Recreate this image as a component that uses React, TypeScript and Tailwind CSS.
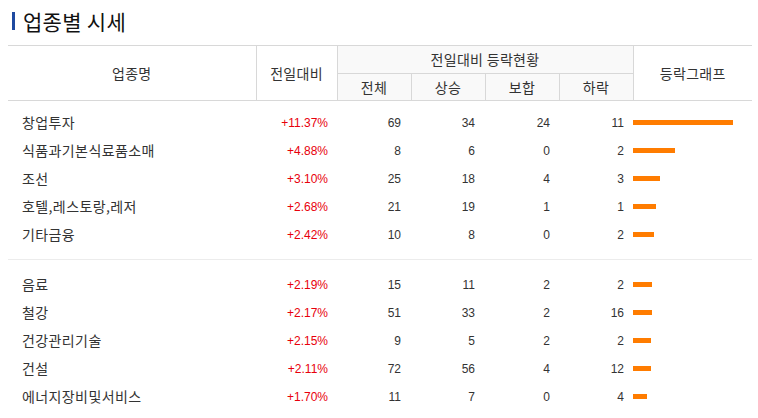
import React from 'react';

type Row = {
  name: string;
  rate: string;
  total: number;
  up: number;
  flat: number;
  down: number;
  bar: number;
};

const groupA: Row[] = [
  { name: '창업투자', rate: '+11.37%', total: 69, up: 34, flat: 24, down: 11, bar: 100 },
  { name: '식품과기본식료품소매', rate: '+4.88%', total: 8, up: 6, flat: 0, down: 2, bar: 42 },
  { name: '조선', rate: '+3.10%', total: 25, up: 18, flat: 4, down: 3, bar: 27 },
  { name: '호텔,레스토랑,레저', rate: '+2.68%', total: 21, up: 19, flat: 1, down: 1, bar: 23 },
  { name: '기타금융', rate: '+2.42%', total: 10, up: 8, flat: 0, down: 2, bar: 21 },
];

const groupB: Row[] = [
  { name: '음료', rate: '+2.19%', total: 15, up: 11, flat: 2, down: 2, bar: 19 },
  { name: '철강', rate: '+2.17%', total: 51, up: 33, flat: 2, down: 16, bar: 19 },
  { name: '건강관리기술', rate: '+2.15%', total: 9, up: 5, flat: 2, down: 2, bar: 18 },
  { name: '건설', rate: '+2.11%', total: 72, up: 56, flat: 4, down: 12, bar: 18 },
  { name: '에너지장비및서비스', rate: '+1.70%', total: 11, up: 7, flat: 0, down: 4, bar: 14 },
];

const kr = "font-['Noto_Sans_CJK_KR','Noto_Sans',sans-serif]";
const num = "font-['Liberation_Sans','Noto_Sans_CJK_KR',sans-serif]";

function BodyRows({ rows }: { rows: Row[] }) {
  return (
    <>
      {rows.map((r) => (
        <tr key={r.name} className="h-[28px]">
          <td className={`pl-[14px] text-[14px] tracking-[0.4px] text-[#333] ${kr}`}>{r.name}</td>
          <td className={`pr-[9px] text-right text-[12px] text-[#e8000b] ${num}`}>{r.rate}</td>
          <td className={`pr-[10px] text-right text-[12px] text-[#333] ${num}`}>{r.total}</td>
          <td className={`pr-[10px] text-right text-[12px] text-[#333] ${num}`}>{r.up}</td>
          <td className={`pr-[9px] text-right text-[12px] text-[#333] ${num}`}>{r.flat}</td>
          <td className={`pr-[9px] text-right text-[12px] text-[#333] ${num}`}>{r.down}</td>
          <td className="p-0">
            <div className="h-[5px] bg-[#ff7c00]" style={{ width: r.bar }} />
          </td>
        </tr>
      ))}
    </>
  );
}

export default function App() {
  return (
    <div className="w-[758px] h-[418px] bg-white px-[8px] overflow-hidden">
      {/* title */}
      <div className="flex h-[45px] items-center gap-[8px] pl-[4px] pb-[3px]">
        <span className="h-[18px] w-[3px] bg-[#1f4aa0]" />
        <h1 className={`text-[21px] leading-none tracking-[0.3px] text-[#111] ${kr}`}>업종별 시세</h1>
      </div>

      <table className="w-[744px] table-fixed border-t border-[#d8d8d8]">
        <colgroup>
          <col className="w-[248px]" />
          <col className="w-[81px]" />
          <col className="w-[74px]" />
          <col className="w-[74px]" />
          <col className="w-[74px]" />
          <col className="w-[74px]" />
          <col className="w-[119px]" />
        </colgroup>
        <thead className={`text-[14px] tracking-[0.3px] text-[#333] ${kr} border-b border-[#d8d8d8]`}>
          <tr className="h-[28px]">
            <th rowSpan={2} className="font-normal border-r border-[#d8d8d8]">
              업종명
            </th>
            <th rowSpan={2} className="font-normal border-r border-[#d8d8d8]">
              전일대비
            </th>
            <th colSpan={4} className="font-normal bg-[#f9f9f9] border-b border-r border-[#d8d8d8]">
              전일대비 등락현황
            </th>
            <th rowSpan={2} className="font-normal">
              등락그래프
            </th>
          </tr>
          <tr className="h-[27px]">
            <th className="font-normal bg-[#f9f9f9] border-r border-[#d8d8d8]">전체</th>
            <th className="font-normal bg-[#f9f9f9] border-r border-[#d8d8d8]">상승</th>
            <th className="font-normal bg-[#f9f9f9] border-r border-[#d8d8d8]">보합</th>
            <th className="font-normal bg-[#f9f9f9] border-r border-[#d8d8d8]">하락</th>
          </tr>
        </thead>
        <tbody>
          <tr className="h-[8px]">
            <td colSpan={7} className="p-0" />
          </tr>
          <BodyRows rows={groupA} />
          <tr className="h-[11px]">
            <td colSpan={7} className="p-0" />
          </tr>
        </tbody>
        <tbody className="border-t border-[#ececec]">
          <tr className="h-[11px]">
            <td colSpan={7} className="p-0" />
          </tr>
          <BodyRows rows={groupB} />
        </tbody>
      </table>
    </div>
  );
}
